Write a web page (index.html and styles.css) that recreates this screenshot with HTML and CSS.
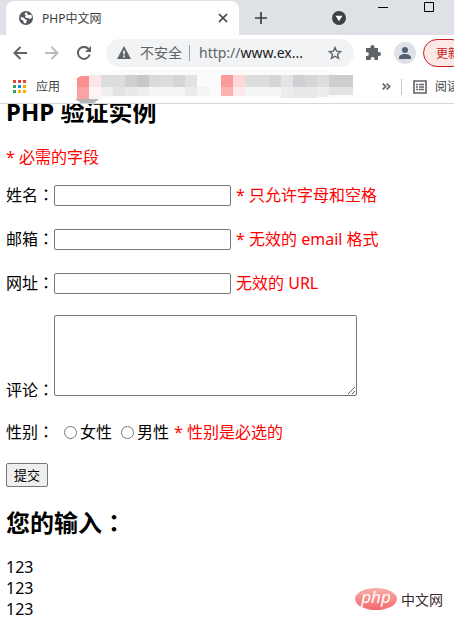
FILE: index.html
```
<!DOCTYPE html>
<html lang="zh-CN">
	<head>
		<meta charset="utf-8">
		<title>PHP中文网</title>
		<link rel="stylesheet" href="styles.css">
	</head>
	<body>

		<header class="browser">
			<div class="tab-strip">
				<div class="tab">
					<svg class="tab-icon" width="14" height="14" viewBox="0 0 14 14">
						<circle cx="7" cy="7" r="7" fill="#54585d"/>
						<path d="M1.500 6l3 .5 2 2 1.500.5-1 3.500-2-.5-1-2.500-2-1zM6.500 1.500l2 .2-.5 1.800 2 .5 2.500-.5.5 3-2 1.500-2-1-2 0-1-1.500 1-1-1.500-1z" fill="#fff"/>
					</svg>
					<span class="tab-title">PHP中文网</span>
					<button class="icon-button" type="button" aria-label="关闭标签页">
						<svg width="10" height="10" viewBox="0 0 10 10"><path d="M1 1l8 8M9 1l-8 8" stroke="#3c4043" stroke-width="1.700"/></svg>
					</button>
				</div>
				<button class="icon-button new-tab" type="button" aria-label="新标签页">
					<svg width="12" height="12" viewBox="0 0 12 12"><path d="M6 0v12M0 6h12" stroke="#3c4043" stroke-width="1.700"/></svg>
				</button>
				<button class="icon-button tab-search" type="button" aria-label="搜索标签页">
					<svg width="14" height="14" viewBox="0 0 14 14"><circle cx="7" cy="7" r="7" fill="#3c4043"/><path d="M3.500 4.800h7L7 10.200z" fill="#fff"/></svg>
				</button>
				<div class="window-buttons">
					<button class="icon-button" type="button" aria-label="最小化">
						<svg width="10" height="10" viewBox="0 0 10 10"><path d="M0 5.500h10" stroke="#000"/></svg>
					</button>
					<button class="icon-button" type="button" aria-label="最大化">
						<svg width="10" height="10" viewBox="0 0 10 10"><path d="M.5.5h9v9h-9z" fill="none" stroke="#000"/></svg>
					</button>
				</div>
			</div>

			<div class="toolbar">
				<button class="icon-button" type="button" aria-label="后退">
					<svg width="14" height="14" viewBox="0 0 14 14"><path d="M14 7H2M7.500 1L1.500 7l6 6" fill="none" stroke="#5f6368" stroke-width="2"/></svg>
				</button>
				<button class="icon-button" type="button" aria-label="前进">
					<svg width="14" height="14" viewBox="0 0 14 14"><path d="M0 7h12M6.500 1l6 6-6 6" fill="none" stroke="#babcbe" stroke-width="2"/></svg>
				</button>
				<button class="icon-button" type="button" aria-label="重新加载">
					<svg width="14" height="14" viewBox="0 0 14 14"><path d="M12.700 8.500A6 6 0 1 1 11.500 3" fill="none" stroke="#5f6368" stroke-width="2"/><path d="M14 0v6H8z" fill="#5f6368"/></svg>
				</button>
				<div class="address-bar">
					<svg width="14" height="13" viewBox="0 0 14 13"><path d="M7 0l7 13H0z" fill="#5f6368"/><path d="M7 4.500v4M7 9.500v2" stroke="#fff" stroke-width="1.500"/></svg>
					<span class="security">不安全</span>
					<span class="url"><span class="scheme">http://</span>www.ex...</span>
					<button class="icon-button" type="button" aria-label="添加书签">
						<svg width="14" height="14" viewBox="0 0 14 14"><path d="M7 1.500l1.600 3.700 4 .4-3 2.700.9 4L7 10.200l-3.500 2.100.9-4-3-2.700 4-.4z" fill="none" stroke="#5f6368" stroke-width="1.400"/></svg>
					</button>
				</div>
				<button class="icon-button extensions" type="button" aria-label="扩展程序">
					<svg width="15" height="15" viewBox="0 0 15 15"><path d="M0 3h4.500V2a2 2 0 0 1 4 0v1H12v4h1a2 2 0 0 1 0 4h-1v4H8.500v-1a1.900 1.900 0 0 0-3.800 0v1H0v-4h1a1.900 1.900 0 0 0 0-3.800H0z" fill="#5f6368"/></svg>
				</button>
				<button class="icon-button profile" type="button" aria-label="个人资料">
					<svg width="22" height="22" viewBox="0 0 22 22"><circle cx="11" cy="11" r="11" fill="#dee1e6"/><circle cx="11" cy="8" r="3" fill="#556077"/><path d="M5 17v-1.500c0-2.300 3-3.500 6-3.500s6 1.200 6 3.500V17z" fill="#556077"/></svg>
				</button>
				<button class="update-button" type="button">更新</button>
			</div>

			<div class="bookmarks">
				<a class="bookmark" href="#">
					<svg width="13" height="13" viewBox="0 0 13 13">
						<path d="M0 0h3v3H0zM5 0h3v3H5zM10 0h3v3h-3z" fill="#ea4335"/>
						<path d="M0 5h3v3H0zM0 10h3v3H0z" fill="#34a05a"/>
						<path d="M5 5h3v3H5z" fill="#1a84f0"/>
						<path d="M10 5h3v3h-3zM5 10h3v3H5zM10 10h3v3h-3z" fill="#f9ab00"/>
					</svg>
					应用
				</a>
				<svg class="hidden-bookmarks" width="288" height="33" viewBox="0 0 288 33">
					<path d="M0 15Q6 4 20 2L60 0h195l15 8-3 20H45L20 31Q8 34 3 31z" fill="#fbfbfb"/>
					<path d="M3 29h24l-5 4H9z" fill="#b5b5b5"/>
					<path d="M5 8l4-2h8v11H5z" fill="#fa8f90"/>
					<path d="M5 17h12v12H5z" fill="#f9a3a5"/>
					<path d="M17 5h12v12H17z" fill="#fde6e7"/>
					<path d="M17 17h12v12H17z" fill="#fdf4f4"/>
					<path d="M29 5h24v12H29z" fill="#dedddd"/>
					<path d="M53 5h12v12H53z" fill="#cfcfd0"/>
					<path d="M65 5h12v12H65z" fill="#c8c8c8"/>
					<path d="M77 5h12v12H77z" fill="#d9dbda"/>
					<path d="M89 5h12v12H89z" fill="#dcdcdc"/>
					<path d="M101 5h12v12h-12z" fill="#d6d4d8"/>
					<path d="M113 5h12v12h-12z" fill="#e3e3e3"/>
					<path d="M29 17h12v9H29z" fill="#efefef"/>
					<path d="M41 17h12v9H41z" fill="#e3e3e3"/>
					<path d="M53 17h12v9H53z" fill="#e9e9e9"/>
					<path d="M65 17h12v9H65z" fill="#eeeeee"/>
					<path d="M77 17h36v9H77z" fill="#f5f5f4"/>
					<path d="M113 17h12v9h-12z" fill="#ebebeb"/>
					<path d="M125 17h12v9h-12z" fill="#f4f4f4"/>
					<path d="M149 5h12v12h-12z" fill="#fa9b9d"/>
					<path d="M149 17h12v9h-12z" fill="#fcb1b3"/>
					<path d="M161 5h12v12h-12z" fill="#fcd8d9"/>
					<path d="M161 17h12v9h-12z" fill="#fee9ea"/>
					<path d="M173 5h24v12h-24z" fill="#dddddc"/>
					<path d="M197 5h12v12h-12z" fill="#d7d6d7"/>
					<path d="M209 5h12v12h-12z" fill="#e2e5e4"/>
					<path d="M221 5h12v12h-12z" fill="#d3ced3"/>
					<path d="M233 5h12v12h-12z" fill="#d5d7d6"/>
					<path d="M245 5h12v12h-12z" fill="#dddddd"/>
					<path d="M257 5h24v12h-24z" fill="#cececf"/>
					<path d="M173 17h36v9h-36z" fill="#f5f5f5"/>
					<path d="M209 17h12v11h-12zM245 17h12v10h-12z" fill="#eceeec"/>
					<path d="M221 17h24v11h-24z" fill="#e7e9e8"/>
					<path d="M257 17h24v8h-24z" fill="#e3e3e3"/>
				</svg>
				<button class="icon-button more" type="button" aria-label="更多书签">
					<svg width="9" height="7" viewBox="0 0 9 7"><path d="M.7.7l3 2.800-3 2.800M4.700.7l3 2.800-3 2.800" fill="none" stroke="#5f6368" stroke-width="1.700"/></svg>
				</button>
				<a class="bookmark reading-list" href="#">
					<svg width="14" height="14" viewBox="0 0 14 14"><path d="M1 1h12v12H1z" fill="none" stroke="#5f6368" stroke-width="1.600"/><path d="M3 4.500h2M6 4.500h5M3 7h2M6 7h5M3 9.500h2M6 9.500h5" stroke="#5f6368" stroke-width="1.400"/></svg>
					阅读清单
				</a>
			</div>
		</header>

		<main class="page">
			<div class="content">
				<h2>PHP 验证实例</h2>
				<p class="required error">* 必需的字段</p>

				<form>
					<div class="row">
						<label for="name">姓名<span class="colon" lang="zh-TW">：</span></label>
						<input class="text-input" type="text" id="name" name="name">
						<span class="error">* 只允许字母和空格</span>
					</div>
					<div class="row">
						<label for="email">邮箱<span class="colon" lang="zh-TW">：</span></label>
						<input class="text-input" type="text" id="email" name="email">
						<span class="error">* 无效的 email 格式</span>
					</div>
					<div class="row">
						<label for="website">网址<span class="colon" lang="zh-TW">：</span></label>
						<input class="text-input" type="text" id="website" name="website">
						<span class="error">无效的 URL</span>
					</div>
					<div class="row row-comment">
						<label class="comment-label" for="comment">评论<span class="colon" lang="zh-TW">：</span></label>
						<textarea class="comment" id="comment" name="comment"></textarea>
					</div>
					<div class="row row-gender">
						<span class="gender-label">性别<span class="colon" lang="zh-TW">：</span></span>
						<label class="choice"><input class="radio" type="radio" name="gender" value="female">女性</label>
						<label class="choice"><input class="radio" type="radio" name="gender" value="male">男性</label>
						<span class="error">* 性别是必选的</span>
					</div>
					<button class="submit" type="submit">提交</button>
				</form>

				<h2 class="result-title">您的输入<span class="colon" lang="zh-TW">：</span></h2>
				<p class="result">123<br>123<br>123</p>
			</div>

			<div class="watermark">
				<svg width="42" height="22" viewBox="0 0 42 22">
					<defs>
						<linearGradient id="oval" x1="0" y1="0" x2="0" y2="1">
							<stop offset="0" stop-color="#f9b0aa"/>
							<stop offset="1" stop-color="#f4686c"/>
						</linearGradient>
					</defs>
					<ellipse cx="21" cy="11" rx="21" ry="11" fill="url(#oval)"/>
					<text class="watermark-php" x="21" y="15" text-anchor="middle">php</text>
				</svg>
				<span class="watermark-name">中文网</span>
			</div>
		</main>

	</body>
</html>
```
FILE: styles.css
```
* {
	box-sizing:				border-box;
}

body {
	background:				#ffffff;
	color:					#000000;
	display:				flex;
	flex-direction:			column;
	font-family:			"Noto Sans", "Noto Sans CJK SC", sans-serif;
	font-size:				16px;
	line-height:			21px;
	margin:					0;
	min-height:				100vh;
	overflow-x:				hidden;
}

h2,
p {
	margin:					0;
}

button {
	font-family:			inherit;
}

svg {
	display:				block;
	flex:					none;
}

.icon-button {
	background:				none;
	border:					none;
	flex:					none;
	padding:				0;
}

/* browser */

.browser {
	border-bottom:			1px solid #d5d6d8;
	font-size:				12px;
}

.tab-strip {
	align-items:			center;
	background:				#dee1e6;
	display:				flex;
	height:					35px;
	padding-left:			6px;
}

.tab {
	align-items:			center;
	align-self:				flex-end;
	background:				#ffffff;
	border-radius:			8px 8px 0 0;
	color:					#3c4043;
	display:				flex;
	gap:					9px;
	height:					34px;
	padding:				0 11px 0 13px;
	width:					233px;
}

.tab-title {
	flex:					1;
}

.new-tab {
	margin-left:			16px;
}

.tab-search {
	margin-left:			65px;
}

.window-buttons {
	align-self:				flex-start;
	display:				flex;
	gap:					36px;
	margin-left:			32px;
	padding-top:			2px;
}

.toolbar {
	align-items:			center;
	display:				flex;
	gap:					18px;
	height:					35px;
	overflow:				hidden;
	padding-left:			13px;
}

.address-bar {
	align-items:			center;
	background:				#f1f3f4;
	border-radius:			14px;
	color:					#5f6368;
	display:				flex;
	flex:					1;
	font-size:				14px;
	height:					28px;
	margin-left:			-3px;
	min-width:				0;
	padding:				0 12px 0 11px;
}

.security {
	border-right:			1px solid #9aa0a6;
	line-height:			16px;
	margin:					0 9px 0 9px;
	padding-right:			7px;
	white-space:			nowrap;
}

.url {
	color:					#202124;
	flex:					1;
	white-space:			nowrap;
}

.scheme {
	color:					#5f6368;
}

.extensions {
	margin-left:			-6px;
}

.profile {
	margin-left:			-5px;
}

.update-button {
	background:				#fce8e6;
	border:					1px solid #c5221f;
	border-radius:			14px;
	color:					#c5221f;
	flex:					none;
	font-size:				12px;
	height:					28px;
	margin:					0 -12px 0 -11px;
	padding:				0 5px 0 12px;
	white-space:			nowrap;
	width:					43px;
}

.bookmarks {
	align-items:			center;
	display:				flex;
	height:					33px;
	overflow:				hidden;
	padding-left:			13px;
}

.bookmark {
	align-items:			center;
	color:					#3c4043;
	display:				flex;
	flex:					none;
	gap:					10px;
	text-decoration:		none;
}

.hidden-bookmarks {
	margin-left:			12px;
}

.more {
	margin-left:			auto;
}

.reading-list {
	border-left:			1px solid #c6c8cb;
	gap:					8px;
	line-height:			16px;
	margin-left:			10px;
	padding-left:			11px;
	white-space:			nowrap;
	width:					53px;
}

/* page */

.page {
	display:				flex;
	flex:					1;
	justify-content:		space-between;
	overflow:				hidden;
	padding:				0 11px 0 6px;
}

/* the page is scrolled, its heading is partly under the toolbar */
.content {
	margin-top:				-8px;
}

h2 {
	font-size:				24px;
	line-height:			32px;
}

.colon {
	font-family:			"Noto Sans CJK TC", sans-serif;
	line-height:			1;
}

.error {
	color:					#ff0000;
}

.required {
	margin:					19px 0 16px;
}

.row {
	align-items:			center;
	display:				flex;
	height:					22px;
	margin-bottom:			22px;
	white-space:			nowrap;
}

.text-input {
	border:					1px solid #767676;
	border-radius:			2px;
	height:					21px;
	margin-right:			5px;
	width:					177px;
}

.row-comment {
	align-items:			flex-end;
	height:					auto;
	margin:					-1px 0 25px;
}

/* short line, so the label sits on the bottom edge of the textarea */
.comment-label {
	line-height:			12px;
}

.comment-label .colon {
	line-height:			0;
}

.comment {
	border:					1px solid #767676;
	border-radius:			2px;
	height:					81px;
	width:					303px;
}

.row-gender {
	margin-bottom:			20px;
}

.gender-label {
	margin-right:			6px;
}

.choice {
	align-items:			center;
	display:				flex;
	margin-right:			5px;
}

.radio {
	height:					13px;
	margin:					0 3px 0 4px;
	width:					13px;
}

.submit {
	background:				#efefef;
	border:					1px solid #767676;
	border-radius:			2px;
	display:				block;
	font-size:				13px;
	height:					24px;
	line-height:			20px;
	padding:				0 7px;
}

.result-title {
	margin:					20px 0 18px;
}

.watermark {
	align-items:			center;
	align-self:				flex-end;
	display:				flex;
	gap:					4px;
	margin:					0 0 22px -90px;
}

.watermark-php {
	fill:					#ffffff;
	font-family:			"Noto Sans", sans-serif;
	font-size:				17px;
	font-style:				italic;
}

.watermark-name {
	color:					#3a2a2a;
	font-size:				14px;
	white-space:			nowrap;
}
```
